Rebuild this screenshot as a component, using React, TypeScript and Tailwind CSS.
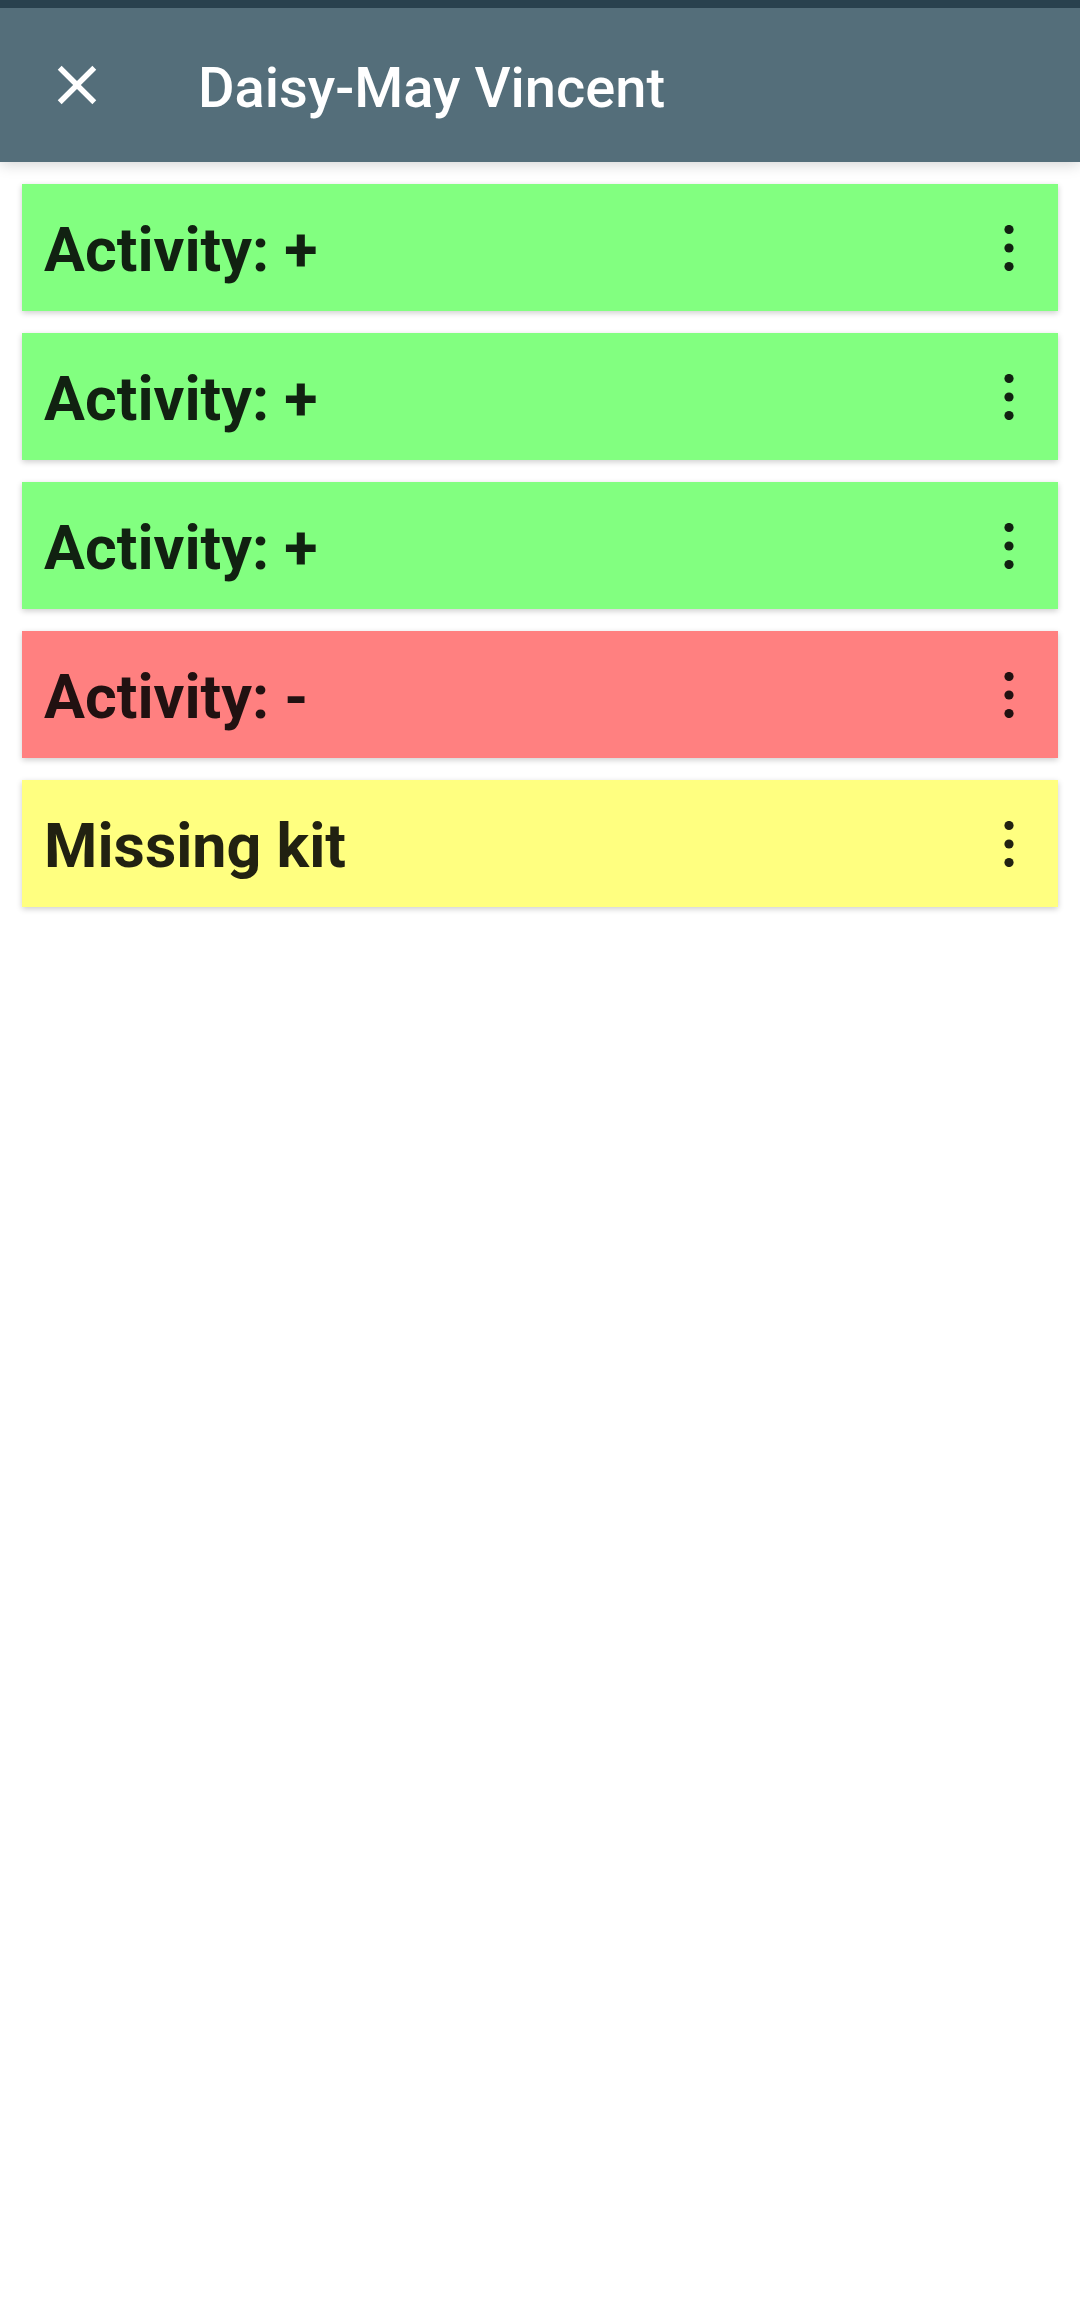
const items = [
  { label: "Activity: +", tone: "bg-[#82ff80]" },
  { label: "Activity: +", tone: "bg-[#82ff80]" },
  { label: "Activity: +", tone: "bg-[#82ff80]" },
  { label: "Activity: -", tone: "bg-[#ff8080]" },
  { label: "Missing kit", tone: "bg-[#ffff80]" },
];

export default function App() {
  return (
    <div className="min-h-screen bg-white font-[Roboto,sans-serif]">
      <header className="flex h-[162px] items-center border-t-8 border-[#29414e] bg-[#546e7a] pl-11 shadow-[0_2px_14px_rgba(0,0,0,0.18)]">
        <button type="button" aria-label="Close" className="flex size-[66px] items-center justify-center text-white">
          <svg viewBox="0 0 24 24" className="size-[66px]" fill="currentColor">
            <path d="M19 6.41 17.59 5 12 10.59 6.41 5 5 6.41 10.59 12 5 17.59 6.41 19 12 13.41 17.59 19 19 17.59 13.41 12z" />
          </svg>
        </button>
        <h1 className="ml-[88px] pt-1.5 text-[56px] leading-[66px] font-medium text-white">Daisy-May Vincent</h1>
      </header>
      <main>
        <ul className="flex flex-col gap-[22px] p-[22px]">
          {items.map((item, i) => (
            <li key={i} className={`flex h-[127px] items-center justify-between pl-[22px] pr-[17px] shadow-[0_2px_6px_rgba(0,0,0,0.2)] ${item.tone}`}>
              <span className="pt-1 text-[61px] leading-[72px] font-bold text-black/87">{item.label}</span>
              <button type="button" aria-label={`Options for ${item.label}`} className="flex size-16 items-center justify-center text-black/87">
                <svg viewBox="0 0 10 46" className="h-[46px] w-[10px]" fill="currentColor">
                  <circle cx="5" cy="4.5" r="4.6" />
                  <circle cx="5" cy="23" r="4.6" />
                  <circle cx="5" cy="41.5" r="4.6" />
                </svg>
              </button>
            </li>
          ))}
        </ul>
      </main>
    </div>
  );
}
